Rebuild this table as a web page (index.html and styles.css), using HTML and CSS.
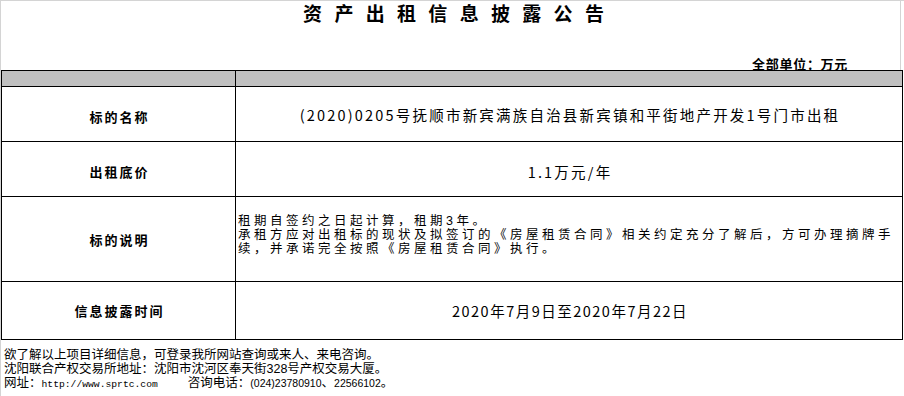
FILE: index.html
```html
<!DOCTYPE html>
<html lang="zh-CN">
<head>
<meta charset="utf-8">
<title>资产出租信息披露公告</title>
<link rel="stylesheet" href="styles.css">
</head>
<body>
<div class="page">
  <div class="head">
    <div class="title">资 产 出 租 信 息 披 露 公 告</div>
    <div class="unit">全部单位：万元</div>
  </div>
  <div class="tbl">
    <div class="c hd"></div>
    <div class="c hd"></div>
    <div class="c lab low">标的名称</div>
    <div class="c val">(2020)0205号抚顺市新宾满族自治县新宾镇和平街地产开发1号门市出租</div>
    <div class="c lab low">出租底价</div>
    <div class="c val low">1.1万元/年</div>
    <div class="c lab">标的说明</div>
    <div class="c desc"><div class="desc-text">租期自签约之日起计算，租期3年。<br>承租方应对出租标的现状及拟签订的《房屋租赁合同》相关约定充分了解后，方可办理摘牌手续，并承诺完全按照《房屋租赁合同》执行。</div></div>
    <div class="c lab">信息披露时间</div>
    <div class="c val tight">2020年7月9日至2020年7月22日</div>
  </div>
  <div class="foot">
    <div class="line">欲了解以上项目详细信息，可登录我所网站查询或来人、来电咨询。</div>
    <div class="line">沈阳联合产权交易所地址：沈阳市沈河区奉天街328号产权交易大厦。</div>
    <div class="line">网址：<span class="url">http://www.sprtc.com</span>咨询电话：<span class="tel">(024)23780910</span>、<span class="tel">22566102</span>。</div>
  </div>
</div>
</body>
</html>
```
FILE: styles.css
```css
body {
  margin: 0;
  background: #fff;
  color: #000;
  font-family: "Noto Sans CJK SC", "Noto Sans", sans-serif;
}

.page {
  width: 903px;
  min-height: 395px;
  border-top: 1px solid #d4d4d4;
  border-left: 1px solid #d4d4d4;
}

.head {
  box-sizing: border-box;
  width: 900px;
  height: 69px;
  border-right: 1px solid #d4d4d4;
  display: flex;
  flex-direction: column;
  justify-content: space-between;
}

.title {
  margin-top: 2px;
  padding-left: 10px;
  text-align: center;
  font-size: 19px;
  line-height: 19px;
  font-weight: bold;
  letter-spacing: 4px;
}

.unit {
  padding-right: 52px;
  text-align: right;
  font-size: 13px;
  line-height: 13px;
  font-weight: bold;
  letter-spacing: 0.7px;
}

.tbl {
  display: grid;
  width: max-content;
  grid-template-columns: 234px 667px;
  grid-template-rows: 16px 55px 55px 85px 58px;
  border-top: 1px solid #000;
  border-left: 1px solid #000;
}

.c {
  box-sizing: border-box;
  border-right: 1px solid #000;
  border-bottom: 1px solid #000;
  display: flex;
  align-items: center;
  justify-content: center;
  white-space: nowrap;
}

.hd {
  background: #c0c0c0;
}

.lab {
  padding-left: 2px;
  font-size: 13px;
  font-weight: bold;
  letter-spacing: 2px;
}

.val {
  padding-left: 2px;
  font-size: 14.5px;
  letter-spacing: 2.2px;
}

.tight {
  letter-spacing: 1.5px;
}

.low {
  padding-top: 5px;
}

.desc {
  justify-content: flex-start;
  padding: 0 0 8px 2px;
  white-space: normal;
}

.desc-text {
  font-family: "Liberation Sans", "Noto Sans CJK SC", sans-serif;
  font-size: 12.5px;
  line-height: 14px;
  letter-spacing: 3.5px;
}

.foot {
  margin-top: 8px;
  padding-left: 3px;
  font-family: "Liberation Sans", "Noto Sans CJK SC", sans-serif;
  font-size: 12.5px;
}

.line {
  height: 14px;
  line-height: 14px;
}

.url {
  font-family: "Liberation Mono", monospace;
  font-size: 9.7px;
  margin-right: 30px;
}

.tel {
  font-size: 10.5px;
}
```
